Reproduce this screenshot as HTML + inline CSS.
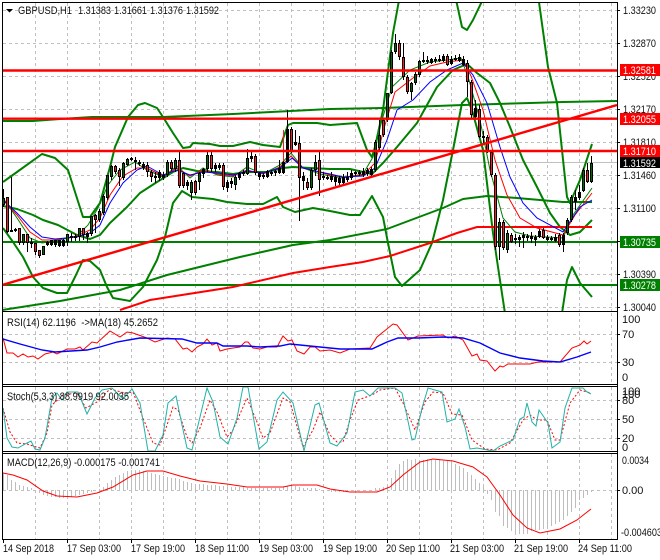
<!DOCTYPE html>
<html><head><meta charset="utf-8"><style>
html,body{margin:0;padding:0;background:#fff}
svg{display:block}
text{font-family:"Liberation Sans",sans-serif;font-size:11px;fill:#111;lengthAdjust:spacingAndGlyphs}
.g{stroke:#c0c0c0;stroke-dasharray:3 3;fill:none}
.l{fill:none}
</style></head><body>
<svg width="660" height="560" viewBox="0 0 660 560" xmlns="http://www.w3.org/2000/svg">
<defs>
<clipPath id="m"><rect x="3" y="3" width="614" height="308"/></clipPath>
<clipPath id="r"><rect x="3" y="313" width="614" height="71"/></clipPath>
<clipPath id="s"><rect x="3" y="387" width="614" height="64"/></clipPath>
<clipPath id="d"><rect x="3" y="454" width="614" height="85"/></clipPath>
</defs>
<rect width="660" height="560" fill="#fff"/>
<!-- grid -->
<path class="g" d="M35.5 3V311M67.5 3V311M99.5 3V311M131.5 3V311M163.5 3V311M195.5 3V311M227.5 3V311M259.5 3V311M291.5 3V311M323.5 3V311M355.5 3V311M387.5 3V311M419.5 3V311M451.5 3V311M483.5 3V311M515.5 3V311M547.5 3V311M579.5 3V311M611.5 3V311"/>
<path class="g" d="M35.5 313V384M67.5 313V384M99.5 313V384M131.5 313V384M163.5 313V384M195.5 313V384M227.5 313V384M259.5 313V384M291.5 313V384M323.5 313V384M355.5 313V384M387.5 313V384M419.5 313V384M451.5 313V384M483.5 313V384M515.5 313V384M547.5 313V384M579.5 313V384M611.5 313V384"/>
<path class="g" d="M35.5 387V451M67.5 387V451M99.5 387V451M131.5 387V451M163.5 387V451M195.5 387V451M227.5 387V451M259.5 387V451M291.5 387V451M323.5 387V451M355.5 387V451M387.5 387V451M419.5 387V451M451.5 387V451M483.5 387V451M515.5 387V451M547.5 387V451M579.5 387V451M611.5 387V451"/>
<path class="g" d="M35.5 454V539M67.5 454V539M99.5 454V539M131.5 454V539M163.5 454V539M195.5 454V539M227.5 454V539M259.5 454V539M291.5 454V539M323.5 454V539M355.5 454V539M387.5 454V539M419.5 454V539M451.5 454V539M483.5 454V539M515.5 454V539M547.5 454V539M579.5 454V539M611.5 454V539"/>
<path class="g" d="M3 10.5H617M3 43.5H617M3 76.5H617M3 109.5H617M3 142.5H617M3 175.5H617M3 208.5H617M3 241.5H617M3 274.5H617M3 307.5H617M3 334.5H617M3 362.5H617M3 400.5H617M3 419.5H617M3 438.5H617M3 490.5H617"/>
<path d="M3 162.5H617" stroke="#c0c0c0" fill="none"/>

<!-- main pane -->
<g clip-path="url(#m)">
<!-- long MAs and Bollinger -->
<g class="l" stroke="#008000" stroke-width="2" fill="none" stroke-linejoin="round">
<path d="M3 121L33 121L60 119L92 117L163 117L233 114L330 109L383 108L463 105L530 103L563 102L617 101"/>
<path d="M2 310L60 301L120 290L167 275L240 257L293 245L330 240L387 229L443 208L463 199L487 196L517 198L563 202L592 202"/>
<path d="M3 182L17 172L42 154L55 158L68 170L83 217L90 217L100 203L110 167L115 147L128 117L138 105L145 103L157 108L163 117L173 133L183 148L190 147L193 143L210 144L220 146L233 146L250 142L263 145L280 147L288 125L293 123L317 123L330 125L357 123L367 150L372 157L375 147L383 110L393 33L400 -5"/>
<path d="M455 -5L462 27L467 30L473 20L485 -5"/>
<path d="M538 -5L548 67L557 103L567 197L570 203L580 180L592 144"/>
<path d="M3 228L13 242L23 257L33 277L43 288L57 293L67 293L75 277L83 260L90 261L100 270L107 287L113 298L130 301L143 287L157 260L165 237L173 203L182 191L192 197L213 199L227 202L247 204L263 204L277 197L283 207L295 212L313 208L330 211L350 215L360 215L372 196L383 217L388 243L395 277L402 286L420 270L432 243L443 200L453 150L462 103L467 98L472 110L483 150L493 233L498 267L506 320"/>
<path d="M561 320L567 280L572 267L580 283L592 297"/>
<path d="M3 206L17 209L33 215L43 220L58 225L77 235L90 239L100 235L110 223L127 207L140 193L157 182L173 172L183 168L197 171L217 172L233 174L247 172L267 172L283 168L293 167L310 168L330 169L350 169L372 174L383 163L397 147L417 123L437 87L453 70L467 64L477 73L490 83L500 103L510 127L523 160L537 187L550 213L560 227L570 235L580 232L592 220"/>
<path d="M2 242H617M2 285H617"/>
</g>
<g fill="none" stroke-width="2" stroke="#ff0000">
<path d="M120 310L150 300L233 287L293 273L330 267L363 262L390 256L430 243L457 233L477 227L592 227"/>
</g>
<!-- thin MAs -->
<g fill="none" stroke-width="1">
<path stroke="#008000" d="M3 198L17 218L30 238L42 243L55 241L77 236L88 225L98 208L108 185L120 170L135 162L147 170L163 177L177 166L190 178L203 168L217 175L233 177L247 167L263 174L280 165L291 153L303 168L320 174L330 176L343 178L363 174L373 157L382 120L392 87L410 70L430 62L447 60L461 58L469 80L480 120L490 170L503 218L515 232L530 236L563 238L573 215L592 188"/>
<path stroke="#ff0000" d="M3 200L17 215L30 232L42 240L55 240L77 236L90 230L100 218L110 195L123 176L137 168L147 168L163 176L177 168L190 176L203 170L217 174L233 176L247 170L263 174L280 167L291 156L303 168L320 172L330 175L343 177L363 175L375 163L385 125L395 92L413 78L430 66L447 62L463 60L471 76L483 110L495 160L507 195L520 218L537 228L563 235L575 215L592 193"/>
<path stroke="#0000ff" d="M3 200L17 213L30 227L42 237L55 239L77 237L90 233L100 225L110 203L123 183L137 170L147 166L163 175L177 170L190 175L203 172L217 173L233 175L247 171L263 173L280 168L292 158L303 168L320 172L330 174L343 177L363 176L375 168L387 140L397 110L413 100L430 82L447 70L463 63L473 75L487 103L500 147L510 177L523 203L537 218L563 232L580 207L592 200"/>
</g>
<!-- wicks -->
<path stroke="#000" fill="none" d="M3.5 189V207M7.5 197V233M11.5 177V232M15.5 228V232M19.5 228V245M23.5 234V245M27.5 234V252M31.5 238V248M35.5 243V255M39.5 250V258M43.5 246V255M47.5 241V246M51.5 240V246M55.5 240V247M59.5 240V247M63.5 239V247M67.5 234V246M71.5 233V242M75.5 234V241M79.5 228V241M83.5 228V240M87.5 232V243M91.5 216V236M95.5 214V233M99.5 209V222M103.5 194V215M107.5 175V200M111.5 165V180M115.5 165V174M119.5 168V186M123.5 162V180M127.5 158V166M131.5 157V161M135.5 157V170M139.5 160V166M143.5 162V170M147.5 162V177M151.5 170V182M155.5 172V183M159.5 170V181M163.5 172V180M167.5 160V177M171.5 160V171M175.5 158V172M179.5 152V188M183.5 172V188M187.5 180V190M191.5 180V200M195.5 180V195M199.5 172V190M203.5 168V178M207.5 152V172M211.5 152V172M215.5 163V172M219.5 163V170M223.5 163V190M227.5 180V192M231.5 178V188M235.5 175V190M239.5 172V180M243.5 170V176M247.5 149V175M251.5 152V162M255.5 154V175M259.5 172V180M263.5 173V179M267.5 170V178M271.5 170V176M275.5 170V176M279.5 160V174M283.5 150V174M287.5 110V163M291.5 127V153M295.5 130V146M299.5 136V221M303.5 172V190M307.5 178V190M311.5 168V190M315.5 155V176M319.5 152V196M323.5 172V180M327.5 175V180M331.5 172V182M335.5 175V186M339.5 176V185M343.5 174V185M347.5 172V182M351.5 170V180M355.5 171V176M359.5 170V176M363.5 168V177M367.5 168V176M371.5 167V177M375.5 140V172M379.5 120V150M383.5 118V137M387.5 93V122M391.5 50V94M395.5 34V54M399.5 40V60M403.5 43V80M407.5 75V94M411.5 82V100M415.5 72V85M419.5 60V77M423.5 52V63M427.5 56V64M431.5 58V64M435.5 57V63M439.5 55V62M443.5 54V62M447.5 54V66M451.5 56V65M455.5 55V61M459.5 54V62M463.5 56V66M467.5 60V97M471.5 80V118M475.5 100V119M479.5 105V138M483.5 131V145M487.5 135V153M491.5 150V177M495.5 173V250M499.5 218V260M503.5 220V250M507.5 230V253M511.5 233V243M515.5 234V244M519.5 235V247M523.5 232V248M527.5 234V241M531.5 232V243M535.5 235V246M539.5 229V238M543.5 228V239M547.5 235V241M551.5 236V241M555.5 234V242M559.5 233V247M563.5 233V252M567.5 218V235M571.5 195V222M575.5 190V210M579.5 185V200M583.5 168V192M587.5 163V183M591.5 156V183"/>
<!-- body outlines -->
<path stroke="#000" stroke-width="3" fill="none" d="M3.5 198V205M7.5 197V232M11.5 230V232M15.5 229V231M19.5 228V243M23.5 234V243M27.5 234V243M31.5 242V244M35.5 243V252M39.5 250V256M43.5 246V255M47.5 242V245M51.5 240V245M55.5 240V245M59.5 240V246M63.5 240V246M67.5 234V242M71.5 236V238M75.5 236V238M79.5 228V237M83.5 228V235M87.5 233V237M91.5 216V234M95.5 215V220M99.5 211V220M103.5 196V213M107.5 175V198M111.5 166V177M115.5 166V172M119.5 170V177M123.5 163V178M127.5 159V165M131.5 158V160M135.5 160V162M139.5 162V164M143.5 164V168M147.5 165V172M151.5 172V177M155.5 176V178M159.5 172V178M163.5 175V178M167.5 162V175M171.5 162V169M175.5 160V169M179.5 160V186M183.5 173V186M187.5 182V186M191.5 182V193M195.5 181V193M199.5 173V182M203.5 169V174M207.5 155V169M211.5 155V169M215.5 165V169M219.5 165V168M223.5 165V187M227.5 182V188M231.5 181V184M235.5 177V185M239.5 173V178M243.5 172V174M247.5 158V174M251.5 156V159M255.5 156V173M259.5 173V177M263.5 175V177M267.5 171V177M271.5 172V174M275.5 171V173M279.5 168V173M283.5 162V173M287.5 129V162M291.5 129V152M295.5 142V145M299.5 143V178M303.5 176V181M307.5 182V188M311.5 170V188M315.5 162V170M319.5 160V180M323.5 176V178M327.5 177V179M331.5 176V180M335.5 177V182M339.5 178V183M343.5 177V183M347.5 177V180M351.5 173V178M355.5 172V174M359.5 172V174M363.5 171V175M367.5 170V174M371.5 169V175M375.5 142V170M379.5 135V148M383.5 120V135M387.5 93V120M391.5 52V93M395.5 43V52M399.5 43V57M403.5 57V77M407.5 77V92M411.5 83V92M415.5 74V83M419.5 61V75M423.5 60V62M427.5 60V62M431.5 59V63M435.5 59V61M439.5 59V61M443.5 56V61M447.5 56V65M451.5 59V64M455.5 58V60M459.5 57V61M463.5 59V65M467.5 63V82M471.5 82V115M475.5 108V117M479.5 109V137M483.5 136V138M487.5 137V152M491.5 152V175M495.5 175V247M499.5 222V247M503.5 222V248M507.5 233V250M511.5 235V242M515.5 238V240M519.5 237V240M523.5 235V238M527.5 236V238M531.5 236V239M535.5 237V240M539.5 231V237M543.5 230V238M547.5 237V240M551.5 238V240M555.5 237V241M559.5 235V245M563.5 235V245M567.5 220V233M571.5 197V220M575.5 197V202M579.5 192V198M583.5 170V191M587.5 170V182M591.5 163V182"/>
<!-- body fills -->
<path stroke="#006a00" fill="none" d="M3.5 199V204M23.5 235V242M43.5 247V254M67.5 235V241M79.5 229V236M91.5 217V233M99.5 212V219M103.5 197V212M107.5 176V197M111.5 167V176M123.5 164V177M127.5 160V164M167.5 163V174M175.5 161V168M191.5 183V192M199.5 174V181M207.5 156V168M235.5 178V184M247.5 159V173M311.5 171V187M315.5 163V169M375.5 143V169M379.5 136V147M387.5 94V119M391.5 53V92M395.5 44V51M411.5 84V91M415.5 75V82M419.5 62V74M467.5 0V0M499.5 223V246M507.5 234V249M567.5 221V232M571.5 198V219M583.5 171V190M591.5 164V181"/>
<path stroke="#ff1a1a" fill="none" d="M7.5 198V231M19.5 229V242M27.5 235V242M35.5 244V251M39.5 251V255M83.5 229V234M95.5 216V219M115.5 167V171M119.5 171V176M147.5 166V171M151.5 173V176M171.5 163V168M179.5 161V185M183.5 174V185M195.5 182V192M211.5 156V168M223.5 166V186M255.5 157V172M283.5 130V161M291.5 130V151M299.5 144V177M307.5 183V187M319.5 161V179M383.5 121V134M399.5 44V56M403.5 58V76M407.5 78V91M447.5 57V64M467.5 64V81M471.5 83V114M479.5 110V136M487.5 138V151M491.5 153V174M495.5 176V246M503.5 223V247M511.5 236V241M543.5 231V237M559.5 236V244M587.5 171V181"/>
<!-- objects -->
<g fill="none" stroke="#ff0000" stroke-width="2.4">
<path d="M2 285L617 105"/>
<path d="M2 70.5H617M2 118.7H617M2 151H617"/>
</g>
</g>

<!-- RSI -->
<g clip-path="url(#r)" fill="none" stroke-width="1">
<path stroke="#ff0000" d="M3 338L7 353L13 353L18 357L23 354L28 357L33 356L38 359L45 354L53 352L57 354L67 349L75 349L80 347L83 350L92 342L97 343L110 331L120 337L127 332L133 333L147 338L155 342L167 338L175 339L183 349L187 348L192 352L197 347L203 344L207 339L212 345L217 343L220 351L227 349L233 348L240 347L245 342L248 342L253 348L260 349L267 347L277 347L283 336L288 341L292 340L297 351L304 354L310 347L315 347L320 351L330 350L340 353L350 349L370 348L377 337L393 324L397 325L408 340L418 336L443 335L448 338L455 336L463 340L472 356L477 354L480 360L487 361L495 371L500 366L503 367L508 364L530 364L538 362L560 362L572 348L580 345L584 341L587 344L591 341"/>
<path stroke="#0000ff" stroke-width="1.4" d="M3 339L20 344L42 350L55 352L87 350L100 347L117 342L140 338L182 339L197 343L217 343L223 346L247 346L260 347L280 346L290 344L330 348L340 349L372 349L387 342L398 338L418 338L443 337L463 338L480 343L500 353L520 358L543 361L560 362L577 357L591 352"/>
</g>
<!-- Stoch -->
<g clip-path="url(#s)" fill="none" stroke-width="1">
<path stroke="#ff0000" stroke-dasharray="2 2" d="M3 408L10 432L17 443L27 444L33 446L40 448L47 433L52 405L63 395L77 393L86 408L97 402L110 389L125 393L133 392L143 418L153 443L160 445L167 425L173 407L178 410L187 437L192 443L200 428L210 400L217 412L227 437L233 430L247 398L257 422L263 438L270 433L283 398L290 402L303 447L313 430L320 412L330 435L337 442L343 442L350 420L358 400L372 395L380 390L395 388L403 403L415 430L425 402L433 392L443 393L452 414L462 415L472 440L485 449L497 450L510 443L523 420L530 415L537 420L547 420L555 440L560 440L570 403L580 390L591 393"/>
<path stroke="#20b2aa" d="M3 408L7 438L12 447L18 448L27 443L31 441L35 449L40 450L45 438L52 398L57 393L62 400L67 392L78 392L87 414L95 398L102 390L112 388L123 399L132 389L140 403L148 451L155 451L163 435L168 403L176 396L182 425L187 448L192 450L200 417L207 388L213 402L220 437L228 444L237 418L243 387L248 387L259 449L267 442L277 400L283 392L293 403L304 451L315 405L319 403L330 443L337 446L347 433L355 392L363 390L370 396L378 388L395 388L402 393L412 440L415 439L422 408L428 388L442 392L447 422L455 419L459 409L465 427L470 449L477 448L493 451L500 446L513 440L520 419L524 417L527 403L532 422L536 426L539 410L548 423L552 448L560 442L565 408L572 388L583 388L587 392L591 394"/>
</g>
<!-- MACD -->
<g clip-path="url(#d)" fill="none">
<path stroke="#bdbdbd" d="M3.5 490V473M7.5 490V475M11.5 490V480M15.5 490V482M19.5 490V485M23.5 490V486M27.5 490V487M31.5 490V488M35.5 490V492M39.5 490V493M43.5 490V495M47.5 490V496M51.5 490V497M55.5 490V497M59.5 490V498M63.5 490V498M67.5 490V498M71.5 490V497M75.5 490V496M79.5 490V495M83.5 490V494M87.5 490V493M91.5 490V492M95.5 490V491M99.5 490V489M103.5 490V487M107.5 490V483M111.5 490V480M115.5 490V477M119.5 490V475M123.5 490V473M127.5 490V471M131.5 490V470M135.5 490V470M139.5 490V470M143.5 490V471M147.5 490V472M151.5 490V473M155.5 490V474M159.5 490V475M163.5 490V476M167.5 490V477M171.5 490V478M175.5 490V478M179.5 490V479M183.5 490V481M187.5 490V482M191.5 490V483M195.5 490V484M199.5 490V484M203.5 490V484M207.5 490V485M211.5 490V485M215.5 490V485M219.5 490V486M223.5 490V486M227.5 490V487M231.5 490V487M235.5 490V487M239.5 490V487M243.5 490V487M247.5 490V488M251.5 490V488M255.5 490V488M259.5 490V488M263.5 490V488M267.5 490V488M271.5 490V488M275.5 490V488M279.5 490V488M283.5 490V487M287.5 490V486M291.5 490V486M295.5 490V486M299.5 490V487M303.5 490V488M307.5 490V488M311.5 490V488M315.5 490V488M319.5 490V489M331.5 490V492M335.5 490V492M339.5 490V492M343.5 490V492M347.5 490V491M351.5 490V491M375.5 490V488M379.5 490V488M383.5 490V487M387.5 490V484M391.5 490V478M395.5 490V470M399.5 490V464M403.5 490V461M407.5 490V459M411.5 490V460M415.5 490V459M419.5 490V460M423.5 490V460M427.5 490V459M431.5 490V460M435.5 490V460M439.5 490V460M443.5 490V461M447.5 490V461M451.5 490V463M455.5 490V464M459.5 490V466M463.5 490V468M467.5 490V472M471.5 490V475M475.5 490V479M479.5 490V483M483.5 490V487M487.5 490V494M491.5 490V500M495.5 490V512M499.5 490V516M503.5 490V526M507.5 490V528M511.5 490V531M515.5 490V533M519.5 490V534M523.5 490V534M527.5 490V534M531.5 490V531M535.5 490V530M539.5 490V530M543.5 490V529M547.5 490V528M551.5 490V526M555.5 490V524M559.5 490V522M563.5 490V520M567.5 490V516M571.5 490V512M575.5 490V508M579.5 490V500M583.5 490V498M587.5 490V495M591.5 490V492"/>
<path stroke="#ff0000" d="M3 473L13 475L27 480L43 491L57 496L77 497L97 493L113 487L133 475L147 471L163 471L180 476L200 481L227 484L247 487L283 487L293 485L317 485L330 489L350 492L377 492L390 487L403 475L420 462L433 459L453 461L473 467L487 477L500 495L513 515L527 528L540 533L560 529L577 520L591 509"/>
</g>

<!-- frames -->
<g fill="none" stroke="#000">
<path d="M2.5 2.5H617.5V539.5H2.5Z"/>
<path d="M2 311.5H618M2 384.5H618M2 386.5H618M2 451.5H618M2 453.5H618"/>
<path d="M3.5 540V543M67.5 540V543M131.5 540V543M195.5 540V543M259.5 540V543M323.5 540V543M387.5 540V543M451.5 540V543M515.5 540V543M579.5 540V543"/>
</g>

<!-- title and indicator text -->
<path d="M6 9H13L9.5 12.5Z" fill="#000"/>
<text x="18" y="14" textLength="54" lengthAdjust="spacingAndGlyphs">GBPUSD,H1</text>
<text x="78" y="14" textLength="33" lengthAdjust="spacingAndGlyphs">1.31383</text>
<text x="114" y="14" textLength="33" lengthAdjust="spacingAndGlyphs">1.31661</text>
<text x="150" y="14" textLength="33" lengthAdjust="spacingAndGlyphs">1.31376</text>
<text x="186" y="14" textLength="33" lengthAdjust="spacingAndGlyphs">1.31592</text>
<text x="7" y="326" textLength="151" lengthAdjust="spacingAndGlyphs" xml:space="preserve">RSI(14) 62.1196  -&gt;MA(18) 45.2652</text>
<text x="7" y="400" textLength="122" lengthAdjust="spacingAndGlyphs">Stoch(5,3,3) 88.9919 92.0035</text>
<text x="7" y="466" textLength="153" lengthAdjust="spacingAndGlyphs">MACD(12,26,9) -0.000175 -0.001741</text>

<!-- price axis -->
<g>
<text x="623" y="14" textLength="33" lengthAdjust="spacingAndGlyphs">1.33230</text>
<text x="623" y="47" textLength="33" lengthAdjust="spacingAndGlyphs">1.32870</text>
<text x="623" y="80" textLength="33" lengthAdjust="spacingAndGlyphs">1.32520</text>
<text x="623" y="113" textLength="33" lengthAdjust="spacingAndGlyphs">1.32170</text>
<text x="623" y="146" textLength="33" lengthAdjust="spacingAndGlyphs">1.31810</text>
<text x="623" y="179" textLength="33" lengthAdjust="spacingAndGlyphs">1.31460</text>
<text x="623" y="212" textLength="33" lengthAdjust="spacingAndGlyphs">1.31100</text>
<text x="623" y="278" textLength="33" lengthAdjust="spacingAndGlyphs">1.30390</text>
<text x="623" y="311" textLength="33" lengthAdjust="spacingAndGlyphs">1.30040</text>
<path stroke="#000" d="M617 10.5h3M617 43.5h3M617 76.5h3M617 109.5h3M617 142.5h3M617 175.5h3M617 208.5h3M617 241.5h3M617 274.5h3M617 307.5h3M617 334.5h3M617 362.5h3M617 400.5h3M617 419.5h3M617 438.5h3M617 490.5h3"/>
<rect x="620" y="64" width="40" height="12" fill="#ff0000"/><text x="623" y="74" textLength="33" lengthAdjust="spacingAndGlyphs" style="fill:#fff">1.32581</text>
<rect x="620" y="113" width="40" height="12" fill="#ff0000"/><text x="623" y="123" textLength="33" lengthAdjust="spacingAndGlyphs" style="fill:#fff">1.32055</text>
<rect x="620" y="145" width="40" height="12" fill="#ff0000"/><text x="623" y="155" textLength="33" lengthAdjust="spacingAndGlyphs" style="fill:#fff">1.31710</text>
<rect x="620" y="157" width="40" height="11" fill="#000"/><text x="623" y="167" textLength="33" lengthAdjust="spacingAndGlyphs" style="fill:#fff">1.31592</text>
<rect x="620" y="236" width="40" height="12" fill="#008000"/><text x="623" y="246" textLength="33" lengthAdjust="spacingAndGlyphs" style="fill:#fff">1.30735</text>
<rect x="620" y="279" width="40" height="12" fill="#008000"/><text x="623" y="289" textLength="33" lengthAdjust="spacingAndGlyphs" style="fill:#fff">1.30278</text>
</g>
<!-- sub axes -->
<text x="622" y="323">100</text>
<text x="622" y="338">70</text>
<text x="622" y="366">30</text>
<text x="622" y="381">0</text>
<text x="622" y="395">100</text>
<text x="622" y="398">100</text>
<text x="622" y="404">80</text>
<text x="622" y="423">50</text>
<text x="622" y="442">20</text>
<text x="622" y="451">0</text>
<text x="622" y="464" textLength="27" lengthAdjust="spacingAndGlyphs">0.0034</text>
<text x="622" y="494">0.00</text>
<text x="621" y="536" textLength="41" lengthAdjust="spacingAndGlyphs">-0.004603</text>

<!-- time axis -->
<text x="3" y="552" textLength="51" lengthAdjust="spacingAndGlyphs">14 Sep 2018</text>
<text x="67" y="552" textLength="54" lengthAdjust="spacingAndGlyphs">17 Sep 03:00</text>
<text x="131" y="552" textLength="54" lengthAdjust="spacingAndGlyphs">17 Sep 19:00</text>
<text x="195" y="552" textLength="54" lengthAdjust="spacingAndGlyphs">18 Sep 11:00</text>
<text x="259" y="552" textLength="54" lengthAdjust="spacingAndGlyphs">19 Sep 03:00</text>
<text x="323" y="552" textLength="54" lengthAdjust="spacingAndGlyphs">19 Sep 19:00</text>
<text x="386" y="552" textLength="54" lengthAdjust="spacingAndGlyphs">20 Sep 11:00</text>
<text x="450" y="552" textLength="54" lengthAdjust="spacingAndGlyphs">21 Sep 03:00</text>
<text x="514" y="552" textLength="54" lengthAdjust="spacingAndGlyphs">21 Sep 19:00</text>
<text x="578" y="552" textLength="54" lengthAdjust="spacingAndGlyphs">24 Sep 11:00</text>
</svg>
</body></html>
